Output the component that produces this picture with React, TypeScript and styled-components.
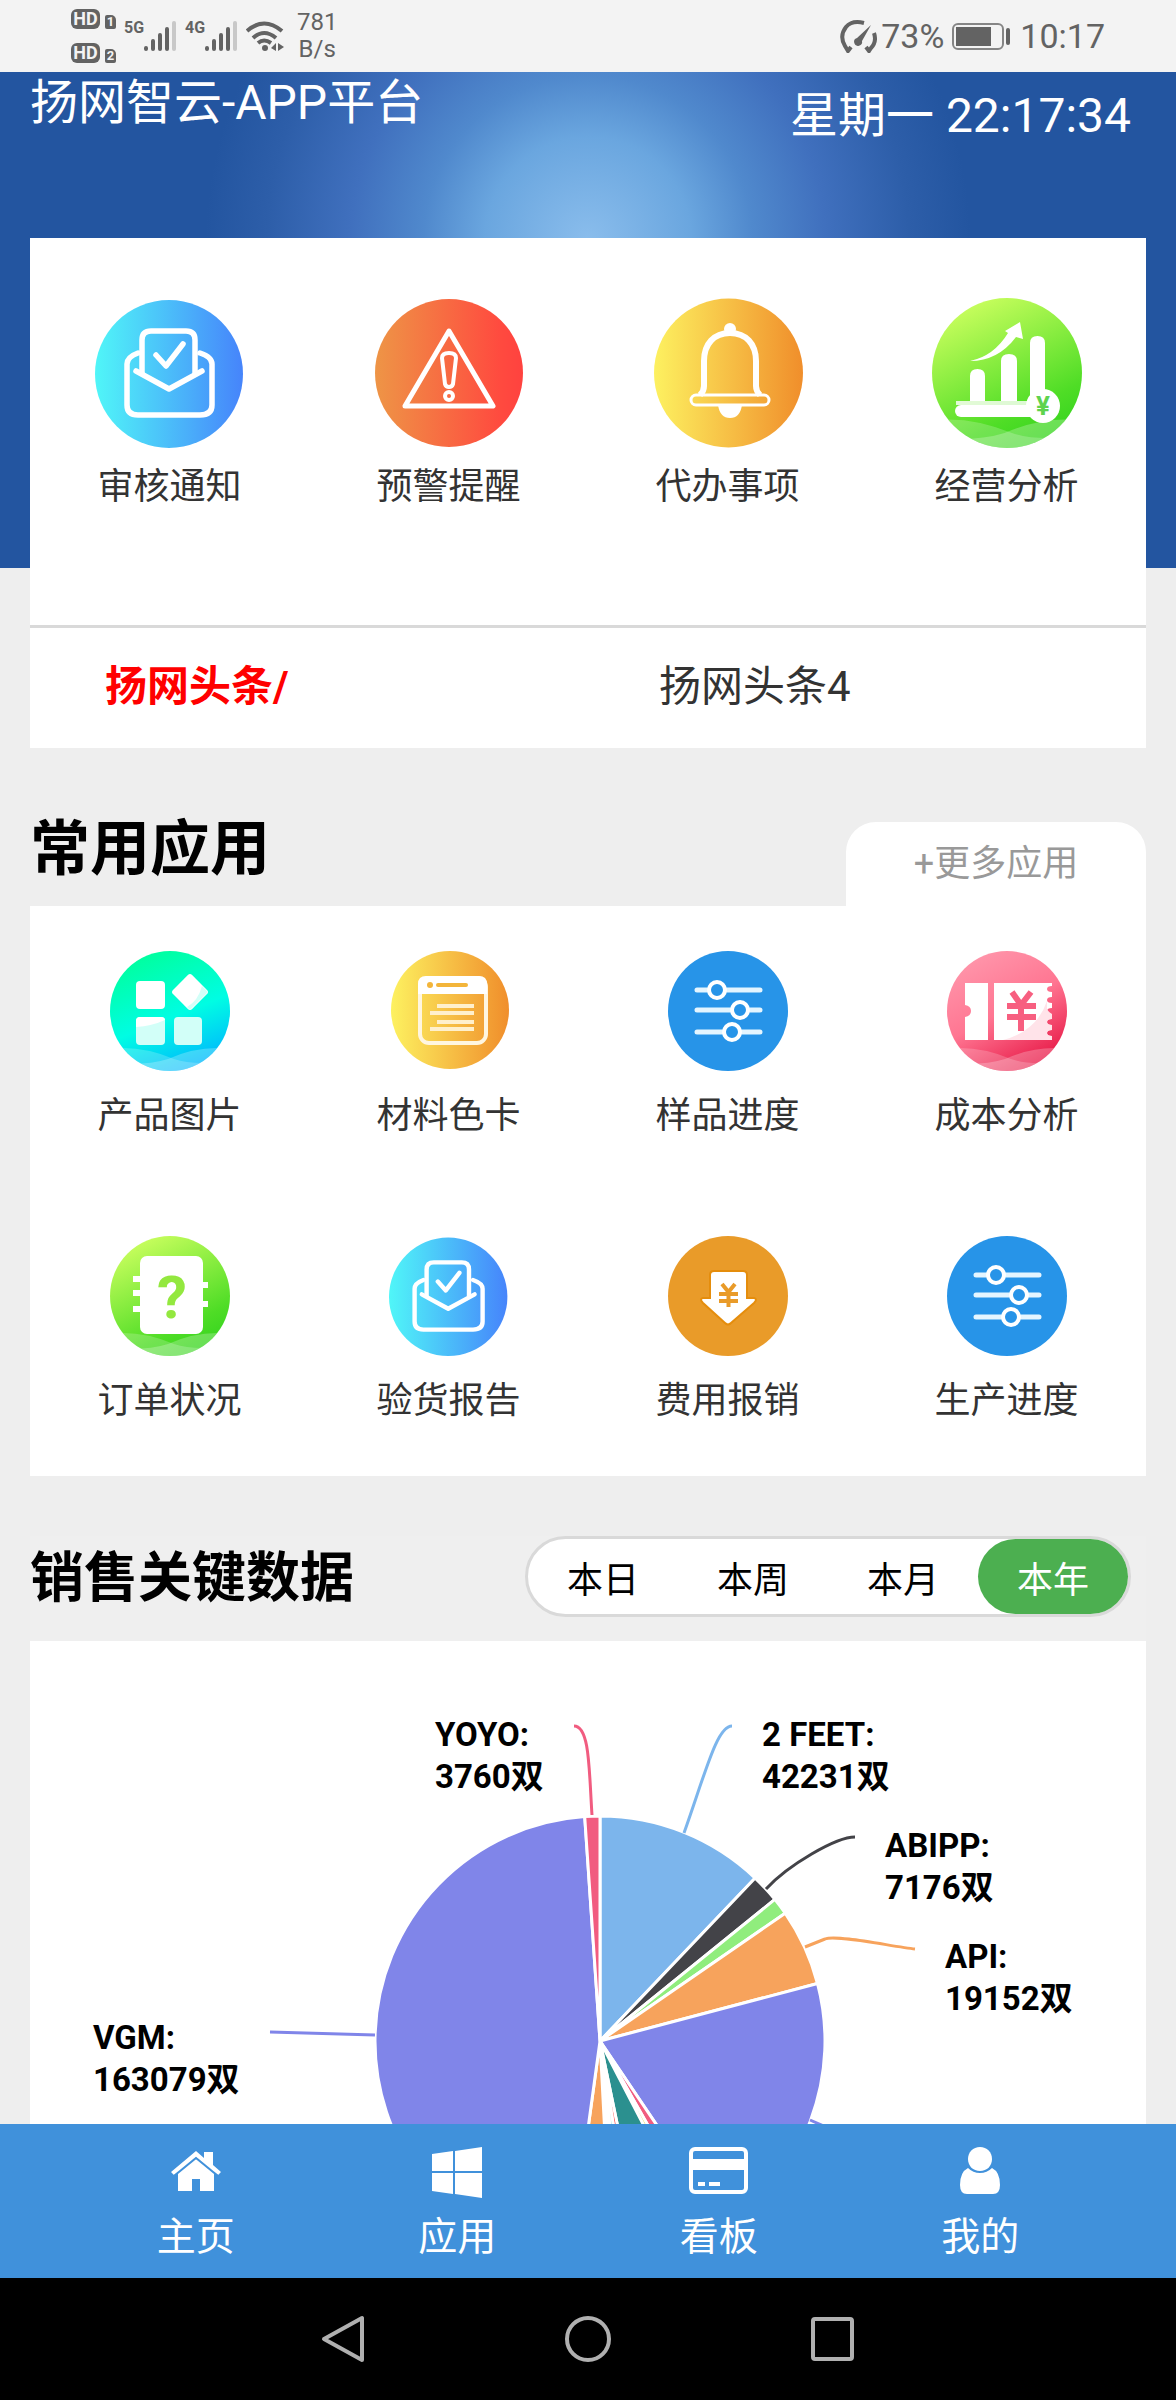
import React, { useState } from "react";
import styled, { createGlobalStyle } from "styled-components";

const GlobalStyle = createGlobalStyle`
  * { box-sizing: border-box; }
  body {
    margin: 0;
    background: #eee;
    font-family: Roboto, "Noto Sans CJK SC", sans-serif;
    color: #333;
  }
  button { font: inherit; color: inherit; background: none; border: 0; padding: 0; cursor: pointer; }
  svg { display: block; }
`;

const Screen = styled.div`
  height: 100vh;
  display: flex;
  flex-direction: column;
`;

/* ---------- status bar ---------- */

const StatusBar = styled.div`
  flex: none;
  height: 72px;
  padding: 0 71px;
  display: flex;
  align-items: center;
  justify-content: space-between;
  background: #f3f3f3;
  color: #636363;
`;

const StatusGroup = styled.div`
  display: flex;
  align-items: center;
  gap: 8px;
`;

const HdColumn = styled.div`
  display: flex;
  flex-direction: column;
  gap: 14px;
`;

const HdRow = styled.div`
  display: flex;
  align-items: flex-end;
  gap: 5px;
`;

const HdBadge = styled.span`
  width: 29px;
  height: 20px;
  border-radius: 6px;
  background: #636363;
  color: #f3f3f3;
  font-size: 18px;
  line-height: 20px;
  font-weight: 700;
  text-align: center;
`;

const SimBadge = styled.span`
  width: 11px;
  height: 14px;
  border-radius: 2px 5px 2px 2px;
  background: #636363;
  color: #f3f3f3;
  font-size: 13px;
  line-height: 14px;
  font-weight: 700;
  text-align: center;
`;

const Network = styled.div`
  display: flex;
  align-items: flex-start;
  font-size: 16px;
  line-height: 14px;
  font-weight: 700;
`;

const Speed = styled.div`
  width: 50px;
  font-size: 24px;
  line-height: 27px;
  text-align: center;
`;

const StatusText = styled.span`
  font-size: 34px;
  line-height: 40px;
`;

const Power = styled.div`
  display: flex;
  align-items: center;
  gap: 4px;
`;

/* ---------- page ---------- */

const Content = styled.main`
  flex: 1;
  min-height: 0;
  overflow-y: auto;
  scrollbar-width: none;
  padding: 0 30px;
  background:
    radial-gradient(
      circle 382px at 50% 168px,
      #8abdec 0%, #6aa6df 27%, #5089cd 43%, #4070be 62%, #2d5ea9 84%, #2355a0 100%
    ) top / 100% 496px no-repeat,
    #eee;
`;

const Header = styled.header`
  height: 166px;
  padding-right: 15px;
  display: flex;
  justify-content: space-between;
  color: #fff;
  font-size: 48px;
`;

const AppName = styled.h1`
  margin: 0;
  font-size: 48px;
  line-height: 62px;
  font-weight: 400;
`;

const Clock = styled.time`
  line-height: 88px;
`;

const Card = styled.section`
  background: #fff;
`;

const PrimaryGrid = styled.div`
  display: grid;
  grid-template-columns: repeat(4, 1fr);
  padding: 60px 0 113px;
  border-bottom: 3px solid #d9d9d9;
`;

const AppGrid = styled.div`
  display: grid;
  grid-template-columns: repeat(4, 1fr);
  row-gap: 95px;
  padding: 45px 0 50px;
  background: #fff;
`;

const AppButton = styled.button<{ $gap: number }>`
  display: flex;
  flex-direction: column;
  align-items: center;
  gap: ${(p) => p.$gap}px;
  font-size: 36px;
  line-height: 50px;
`;

const Headlines = styled.div`
  display: grid;
  grid-template-columns: 1fr 1fr;
  padding-bottom: 2px;
  font-size: 42px;
  line-height: 118px;
`;

const HeadlineTitle = styled.strong`
  padding-left: 75px;
  color: #f00;
`;

const HeadlineLink = styled.a`
  padding-left: 71px;
  color: #333;
  text-decoration: none;
`;

const SectionHead = styled.div`
  margin-top: 74px;
  height: 84px;
  display: flex;
  align-items: flex-start;
  justify-content: space-between;
`;

const SectionTitle = styled.h2`
  margin: 0;
  font-size: 60px;
  line-height: 55px;
  color: #000;
`;

const MoreButton = styled.button`
  width: 300px;
  height: 84px;
  border-radius: 30px 30px 0 0;
  background: #fff;
  color: #999;
  font-size: 36px;
  line-height: 78px;
`;

const SalesHead = styled.div`
  margin-top: 60px;
  padding-right: 15px;
  height: 105px;
  display: flex;
  align-items: flex-start;
  justify-content: space-between;
  background: #efefef;
`;

const SalesTitle = styled.h2`
  margin: 0;
  font-size: 54px;
  line-height: 86px;
  color: #000;
`;

const Segmented = styled.div`
  display: flex;
  border: 3px solid #d9d9d9;
  border-radius: 41px;
  background: #fff;
`;

const Segment = styled.button<{ $active: boolean }>`
  width: 150px;
  height: 75px;
  border-radius: 38px;
  font-size: 36px;
  color: ${(p) => (p.$active ? "#fff" : "#000")};
  background: ${(p) => (p.$active ? "#4caf50" : "transparent")};
`;

const ChartSvg = styled.svg`
  width: 100%;
  height: auto;
  font-size: 33px;
  font-weight: 700;
`;

/* ---------- bottom bars ---------- */

const TabBar = styled.nav`
  flex: none;
  height: 154px;
  padding: 0 65px;
  display: grid;
  grid-template-columns: repeat(4, 1fr);
  background: #4091db;
  color: #fff;
`;

const TabLink = styled.a`
  display: flex;
  flex-direction: column;
  align-items: center;
  padding-top: 17px;
  gap: 13px;
  color: #fff;
  text-decoration: none;
  font-size: 39px;
  line-height: 50px;
`;

const SystemNav = styled.div`
  flex: none;
  height: 122px;
  display: flex;
  align-items: center;
  justify-content: center;
  gap: 185px;
  background: #000;
`;

/* ---------- icons ---------- */

type IconProps = { size: number };

const Waves = ({ id }: { id: string }) => (
  <g clipPath={`url(#${id})`} fill="#fff">
    <path d="M0 98 Q30 94 64 108 Q84 115 120 110 V120 H0Z" opacity=".2" />
    <path d="M120 98 Q90 94 58 108 Q36 115 0 112 V120 H120Z" opacity=".24" />
  </g>
);

const Envelope = ({ size }: IconProps) => (
  <svg width={size} height={size} viewBox="0 0 150 150" fill="none" aria-hidden="true">
    <defs>
      <linearGradient id={`env${size}`}>
        <stop offset="0" stopColor="#50f6f8" />
        <stop offset="1" stopColor="#4684fb" />
      </linearGradient>
    </defs>
    <circle cx="74" cy="76" r="74" fill={`url(#env${size})`} />
    <g transform="translate(-1 0)" stroke="#fff" strokeWidth="5.5" strokeLinecap="round" strokeLinejoin="round">
      <path d="M48 75V42Q48 33 57 33H92Q101 33 101 42V75" />
      <path d="M42 73L75 91L108 73" />
      <path d="M44 55Q33 59 33 66V107Q33 117 44 117H106Q118 117 118 107V66Q118 59 106 55" />
      <path d="M62 57L72 68L89 46" />
    </g>
  </svg>
);

const Warning = ({ size }: IconProps) => (
  <svg width={size} height={size} viewBox="0 0 150 150" fill="none" aria-hidden="true">
    <defs>
      <linearGradient id="warn">
        <stop offset="0" stopColor="#ee9546" />
        <stop offset=".85" stopColor="#ff4a3f" />
        <stop offset="1" stopColor="#ff423f" />
      </linearGradient>
    </defs>
    <circle cx="75" cy="75" r="74" fill="url(#warn)" />
    <g stroke="#fff" strokeLinejoin="round">
      <path d="M75 33L119 108H31Z" strokeWidth="5" />
      <path d="M68 60Q68 55 75 55Q82 55 82 60L79 86Q78 89 75 89Q72 89 71 86Z" strokeWidth="4" />
      <circle cx="75" cy="98" r="4" strokeWidth="4" />
    </g>
  </svg>
);

const Bell = ({ size }: IconProps) => (
  <svg width={size} height={size} viewBox="0 0 150 150" fill="none" aria-hidden="true">
    <defs>
      <linearGradient id="bell">
        <stop offset="0" stopColor="#fdf160" />
        <stop offset="1" stopColor="#f08e2b" />
      </linearGradient>
    </defs>
    <circle cx="75.5" cy="75" r="74.5" fill="url(#bell)" />
    <circle cx="77" cy="31" r="6" fill="#fff" />
    <path d="M47 97Q51 93 51 88V63C51 46 61 35 77 35S103 46 103 63V88Q103 93 107 97" stroke="#fff" strokeWidth="6" />
    <rect x="38" y="97" width="78" height="10" rx="5" stroke="#fff" strokeWidth="3" />
    <path d="M65 107H89Q87 120 77 120T65 107Z" fill="#fff" />
  </svg>
);

const Growth = ({ size }: IconProps) => (
  <svg width={size} height={size} viewBox="0 0 150 150" aria-hidden="true">
    <defs>
      <linearGradient id="growth" x1=".25" y1="0" x2=".75" y2="1">
        <stop offset="0" stopColor="#cdff5f" />
        <stop offset=".75" stopColor="#4fdd26" />
        <stop offset="1" stopColor="#33d31e" />
      </linearGradient>
      <clipPath id="growthClip"><circle cx="60" cy="60" r="60" /></clipPath>
    </defs>
    <circle cx="75" cy="75" r="75" fill="url(#growth)" />
    <g transform="scale(1.25)"><Waves id="growthClip" /></g>
    <g fill="#fff">
      <path d="M38 103V78Q38 71 45.500 71T53 78V103ZM69 103V63Q69 56 77 56T85 63V103ZM98 107V45Q98 38 105.500 38T113 45V107Z" />
      <rect x="23" y="107" width="85" height="12" rx="6" />
      <rect x="24" y="103" width="80" height="4" opacity=".8" />
      <path d="M38 63Q62 58 76 35L73 33L88 24L91 41L84 39Q66 63 38 63Z" />
      <circle cx="111" cy="108" r="17" />
    </g>
    <text x="111" y="117" textAnchor="middle" fontSize="26" fontWeight="700" fill="#5ed34e">¥</text>
  </svg>
);

const Blocks = ({ size }: IconProps) => (
  <svg width={size} height={size} viewBox="0 0 120 120" aria-hidden="true">
    <defs>
      <linearGradient id="blocks" x1=".3" y1="0" x2=".7" y2="1">
        <stop offset="0" stopColor="#00ff9c" />
        <stop offset=".55" stopColor="#00fde3" />
        <stop offset="1" stopColor="#00b4ff" />
      </linearGradient>
      <clipPath id="blocksClip"><circle cx="60" cy="60" r="60" /></clipPath>
    </defs>
    <circle cx="60" cy="60" r="60" fill="url(#blocks)" />
    <Waves id="blocksClip" />
    <rect x="26" y="30" width="29" height="28" rx="4" fill="#fff" />
    <rect x="26" y="66" width="29" height="28" rx="4" fill="#d2fff8" />
    <path d="M26 76V70Q26 66 30 66H51Q55 66 55 69Q42 75 26 76Z" fill="#fff" />
    <rect x="64" y="66" width="28" height="28" rx="4" fill="#d2fff8" />
    <rect x="66.500" y="27.500" width="27" height="27" rx="3" transform="rotate(45 80 41)" fill="#fff" />
    <path d="M92 35L98 41L80 59L77 56Q88 50 92 35Z" fill="#d2fff8" />
  </svg>
);

const Swatch = ({ size }: IconProps) => (
  <svg width={size} height={size} viewBox="0 0 120 120" fill="none" aria-hidden="true">
    <defs>
      <linearGradient id="swatch">
        <stop offset="0" stopColor="#fdf160" />
        <stop offset="1" stopColor="#f08e2b" />
      </linearGradient>
    </defs>
    <circle cx="61" cy="59" r="59" fill="url(#swatch)" />
    <rect x="31" y="27" width="66" height="65" rx="9" stroke="#fff6e0" strokeWidth="4" />
    <path d="M29 43V33Q29 25 37 25H90Q98 25 98 33V43Z" fill="#fff" />
    <circle cx="41" cy="34" r="3" fill="#f3b53a" />
    <path d="M49 34H77" stroke="#f3b53a" strokeWidth="4" strokeLinecap="round" />
    <path d="M48 55H85M41 62H85M48 71H85M41 78H85" stroke="#fff0cc" strokeWidth="4" />
  </svg>
);

const Sliders = ({ size }: IconProps) => (
  <svg width={size} height={size} viewBox="0 0 120 120" aria-hidden="true">
    <circle cx="60" cy="60" r="60" fill="#2794e8" />
    <path d="M29 39H92M29 59H92M29 81H92" stroke="#e4f5ff" strokeWidth="5" strokeLinecap="round" />
    <g fill="#2794e8" stroke="#fff" strokeWidth="4">
      <circle cx="49" cy="39" r="8" />
      <circle cx="72" cy="59" r="8" />
      <circle cx="64" cy="81" r="8" />
    </g>
  </svg>
);

const Ticket = ({ size }: IconProps) => (
  <svg width={size} height={size} viewBox="0 0 120 120" aria-hidden="true">
    <defs>
      <linearGradient id="ticket" x1=".3" y1="0" x2=".8" y2=".9">
        <stop offset="0" stopColor="#ff95aa" />
        <stop offset=".5" stopColor="#ff7692" />
        <stop offset="1" stopColor="#e91f4c" />
      </linearGradient>
      <clipPath id="ticketClip"><circle cx="60" cy="60" r="60" /></clipPath>
    </defs>
    <circle cx="60" cy="60" r="60" fill="url(#ticket)" />
    <Waves id="ticketClip" />
    <path d="M18 32H41V89H18V66Q24 65 24 60T18 54Z" fill="#fff" />
    <path
      d="M47 32H105V35Q100 35 100 38T105 41V46Q100 46 100 49T105 52V57Q100 57 100 60T105 63V68Q100 68 100 71T105 74V79Q100 79 100 82T105 85V89H47Z"
      fill="#fff"
    />
    <path d="M56 89Q90 80 100 50V57Q100 60 105 63V68Q100 68 100 71T105 74V79Q100 79 100 82T105 85V89Z" fill="#ffe3e9" />
    <path d="M65 41L74 54L84 41M74 54V80M60 55H89M60 66H89" stroke="#f75f80" strokeWidth="6" fill="none" />
  </svg>
);

const Orders = ({ size }: IconProps) => (
  <svg width={size} height={size} viewBox="0 0 120 120" aria-hidden="true">
    <defs>
      <linearGradient id="orders" x1=".25" y1="0" x2=".75" y2="1">
        <stop offset="0" stopColor="#cdff5f" />
        <stop offset=".75" stopColor="#4fdd26" />
        <stop offset="1" stopColor="#33d31e" />
      </linearGradient>
      <clipPath id="ordersClip"><circle cx="60" cy="60" r="60" /></clipPath>
    </defs>
    <circle cx="60" cy="60" r="60" fill="url(#orders)" />
    <Waves id="ordersClip" />
    <rect x="30" y="20" width="63" height="78" rx="7" fill="#fff" />
    <path d="M23 43H35M23 57H35M23 73H35M90 49H98M90 68H98" stroke="#fff" strokeWidth="6" />
    <text x="62" y="82" textAnchor="middle" fontSize="60" fontWeight="700" fill="#93e83f">?</text>
  </svg>
);

const Expense = ({ size }: IconProps) => (
  <svg width={size} height={size} viewBox="0 0 120 120" aria-hidden="true">
    <circle cx="60" cy="60" r="60" fill="#e99b29" />
    <path
      d="M46 35H75Q79 35 79 39V62H86Q90 63 86 67L63 87Q60 90 57 87L35 67Q31 63 35 62H42V39Q42 35 46 35Z"
      fill="#fff"
      stroke="#e58d0c"
      strokeWidth="2"
    />
    <path d="M54 48L60.500 56L67 48M60.500 56V71M51 58H70M51 65H70" stroke="#e99b29" strokeWidth="4" fill="none" />
  </svg>
);

const Signal = () => (
  <svg width="33" height="31" viewBox="0 0 33 31" aria-hidden="true">
    <g stroke="#636363" strokeWidth="4" strokeLinecap="round">
      <path d="M2 27V28M9 20V28M16 14V28M23 8V28" />
      <path d="M30 2V28" stroke="#c8c8c8" />
    </g>
  </svg>
);

const Wifi = () => (
  <svg width="38" height="31" viewBox="0 0 38 31" fill="none" stroke="#636363" strokeWidth="4" aria-hidden="true">
    <path d="M1 10Q18 -5 36 10M7 17Q18 7 30 17M12 22Q18 17 25 22" />
    <circle cx="19" cy="27" r="3" fill="#636363" stroke="none" />
    <path d="M30 22V30L25 27ZM32 30V22L38 26Z" fill="#636363" stroke="none" />
  </svg>
);

const Gauge = () => (
  <svg width="37" height="33" viewBox="0 0 37 33" fill="none" stroke="#636363" strokeWidth="4" aria-hidden="true">
    <path d="M24 3Q12 0 6 7Q-1 16 5 26L8 31L11 27M34 13Q37 22 31 28L29 31L26 27" />
    <path d="M31 5L22 21A4 4 0 1 1 17 18Z" fill="#636363" stroke="none" />
  </svg>
);

const Battery = () => (
  <svg width="60" height="27" viewBox="0 0 60 27" aria-hidden="true">
    <rect x="1" y="1" width="50" height="25" rx="5" fill="none" stroke="#858585" strokeWidth="2" />
    <rect x="4" y="4" width="35" height="19" fill="#636363" />
    <rect x="54" y="5" width="4" height="17" rx="2" fill="#636363" />
  </svg>
);

const HomeIcon = () => (
  <svg width="50" height="58" viewBox="0 0 50 58" fill="#fff" aria-hidden="true">
    <path d="M7 50V30L25 16L43 30V50H29V38H21V50Z" />
    <path d="M25 10L33 17V11H42V24L50 31L47 34L25 16L3 34L0 31Z" />
    <path d="M3 35L25 17L47 35" stroke="#4091db" strokeWidth="2" fill="none" />
  </svg>
);

const WindowsIcon = () => (
  <svg width="50" height="58" viewBox="0 0 50 58" fill="#fff" aria-hidden="true">
    <path d="M0 13L21 10V30H0ZM23 10L50 6V30H23ZM0 32H21V53L0 50ZM23 32H50V57L23 53Z" />
  </svg>
);

const CardIcon = () => (
  <svg width="59" height="58" viewBox="0 0 59 58" aria-hidden="true">
    <rect x="2" y="8" width="55" height="43" rx="4" fill="none" stroke="#fff" strokeWidth="4" />
    <path d="M2 18H57V29H2Z" fill="#fff" />
    <path d="M9 43H16M20 43H31" stroke="#fff" strokeWidth="4" />
  </svg>
);

const PersonIcon = () => (
  <svg width="40" height="58" viewBox="0 0 40 58" fill="#fff" aria-hidden="true">
    <path d="M20 6C27 6 32 11 32 18S27 30 20 30S8 25 8 18S13 6 20 6Z" />
    <path d="M8 27Q13 32 20 32T32 27Q40 31 40 44Q40 53 33 53H7Q0 53 0 44Q0 31 8 27Z" />
  </svg>
);

/* ---------- pie chart ---------- */

const CX = 570;
const CY = 400;
const R = 225;

const slices = [
  { to: 43.6, color: "#7cb5ec" },
  { to: 51, color: "#434348" },
  { to: 55.4, color: "#90ed7d" },
  { to: 75.2, color: "#f7a35c" },
  { to: 146, color: "#8085e9" },
  { to: 150.4, color: "#f15c80" },
  { to: 152.6, color: "#e4d354" },
  { to: 168.3, color: "#2b908f" },
  { to: 171, color: "#f45b5b" },
  { to: 173.4, color: "#91e8e1" },
  { to: 175.2, color: "#7cb5ec" },
  { to: 177, color: "#434348" },
  { to: 187.8, color: "#f7a35c" },
  { to: 356.1, color: "#8085e9" },
  { to: 360, color: "#f15c80" },
];

const labels = [
  { name: "YOYO:", value: "3760双", x: 405, y: 105 },
  { name: "2 FEET:", value: "42231双", x: 732, y: 105 },
  { name: "ABIPP:", value: "7176双", x: 855, y: 216 },
  { name: "API:", value: "19152双", x: 915, y: 327 },
  { name: "VGM:", value: "163079双", x: 63, y: 408 },
];

const connectors = [
  { d: "M544 85C560 85 559 130 562 174", color: "#f15c80" },
  { d: "M702 85C687 85 676 130 654 192", color: "#7cb5ec" },
  { d: "M825 196C806 196 758 224 736 248", color: "#434348" },
  { d: "M885 308C864 306 806 293 795 298L775 306", color: "#f7a35c" },
  { d: "M240 391L345 394", color: "#8085e9" },
  { d: "M780 479L796 486", color: "#8085e9" },
];

const point = (deg: number) => {
  const a = (deg * Math.PI) / 180;
  return `${CX + R * Math.sin(a)} ${CY - R * Math.cos(a)}`;
};

const PieChart = () => (
  <ChartSvg viewBox="0 0 1116 760" role="img" aria-label="销售关键数据">
    {slices.map((s, i) => {
      const from = i === 0 ? 0 : slices[i - 1].to;
      return (
        <path
          key={s.to}
          d={`M${CX} ${CY}L${point(from)}A${R} ${R} 0 0 1 ${point(s.to)}Z`}
          fill={s.color}
          stroke="#fff"
          strokeWidth="3"
          strokeLinejoin="round"
        />
      );
    })}
    {connectors.map((c) => (
      <path key={c.d} d={c.d} fill="none" stroke={c.color} strokeWidth="3" />
    ))}
    {labels.map((l) => (
      <text key={l.name} x={l.x} y={l.y} fill="#000">
        {l.name}
        <tspan x={l.x} dy="42">{l.value}</tspan>
      </text>
    ))}
  </ChartSvg>
);

/* ---------- data ---------- */

const primary = [
  { label: "审核通知", Icon: Envelope },
  { label: "预警提醒", Icon: Warning },
  { label: "代办事项", Icon: Bell },
  { label: "经营分析", Icon: Growth },
];

const apps = [
  { label: "产品图片", Icon: Blocks },
  { label: "材料色卡", Icon: Swatch },
  { label: "样品进度", Icon: Sliders },
  { label: "成本分析", Icon: Ticket },
  { label: "订单状况", Icon: Orders },
  { label: "验货报告", Icon: Envelope },
  { label: "费用报销", Icon: Expense },
  { label: "生产进度", Icon: Sliders },
];

const periods = ["本日", "本周", "本月", "本年"];

const tabs = [
  { label: "主页", Icon: HomeIcon },
  { label: "应用", Icon: WindowsIcon },
  { label: "看板", Icon: CardIcon },
  { label: "我的", Icon: PersonIcon },
];

export default function App() {
  const [period, setPeriod] = useState("本年");

  return (
    <Screen>
      <GlobalStyle />
      <StatusBar>
        <StatusGroup>
          <HdColumn>
            <HdRow><HdBadge>HD</HdBadge><SimBadge>1</SimBadge></HdRow>
            <HdRow><HdBadge>HD</HdBadge><SimBadge>2</SimBadge></HdRow>
          </HdColumn>
          <Network>5G<Signal /></Network>
          <Network>4G<Signal /></Network>
          <Wifi />
          <Speed>781 B/s</Speed>
        </StatusGroup>
        <StatusGroup>
          <Power><Gauge /><StatusText>73%</StatusText></Power>
          <Battery />
          <StatusText>10:17</StatusText>
        </StatusGroup>
      </StatusBar>

      <Content>
        <Header>
          <AppName>扬网智云-APP平台</AppName>
          <Clock>星期一 22:17:34</Clock>
        </Header>

        <Card>
          <PrimaryGrid>
            {primary.map(({ label, Icon }) => (
              <AppButton key={label} type="button" $gap={14}>
                <Icon size={150} />
                {label}
              </AppButton>
            ))}
          </PrimaryGrid>
          <Headlines>
            <HeadlineTitle>扬网头条/</HeadlineTitle>
            <HeadlineLink href="#headline">扬网头条4</HeadlineLink>
          </Headlines>
        </Card>

        <SectionHead>
          <SectionTitle>常用应用</SectionTitle>
          <MoreButton type="button">+更多应用</MoreButton>
        </SectionHead>
        <AppGrid>
          {apps.map(({ label, Icon }) => (
            <AppButton key={label} type="button" $gap={20}>
              <Icon size={120} />
              {label}
            </AppButton>
          ))}
        </AppGrid>

        <SalesHead>
          <SalesTitle>销售关键数据</SalesTitle>
          <Segmented>
            {periods.map((p) => (
              <Segment
                key={p}
                type="button"
                aria-pressed={p === period}
                $active={p === period}
                onClick={() => setPeriod(p)}
              >
                {p}
              </Segment>
            ))}
          </Segmented>
        </SalesHead>
        <Card>
          <PieChart />
        </Card>
      </Content>

      <TabBar>
        {tabs.map(({ label, Icon }) => (
          <TabLink key={label} href="#tab">
            <Icon />
            {label}
          </TabLink>
        ))}
      </TabBar>

      <SystemNav>
        <button type="button" aria-label="返回">
          <svg width="60" height="60" viewBox="0 0 60 60" fill="none" stroke="#b0b0b0" strokeWidth="4" strokeLinejoin="round">
            <path d="M49 9V51L11 30Z" />
          </svg>
        </button>
        <button type="button" aria-label="主屏幕">
          <svg width="60" height="60" viewBox="0 0 60 60" fill="none" stroke="#b0b0b0" strokeWidth="4">
            <circle cx="30" cy="30" r="21" />
          </svg>
        </button>
        <button type="button" aria-label="最近任务">
          <svg width="60" height="60" viewBox="0 0 60 60" fill="none" stroke="#b0b0b0" strokeWidth="4">
            <rect x="10" y="10" width="39" height="40" rx="2" />
          </svg>
        </button>
      </SystemNav>
    </Screen>
  );
}
